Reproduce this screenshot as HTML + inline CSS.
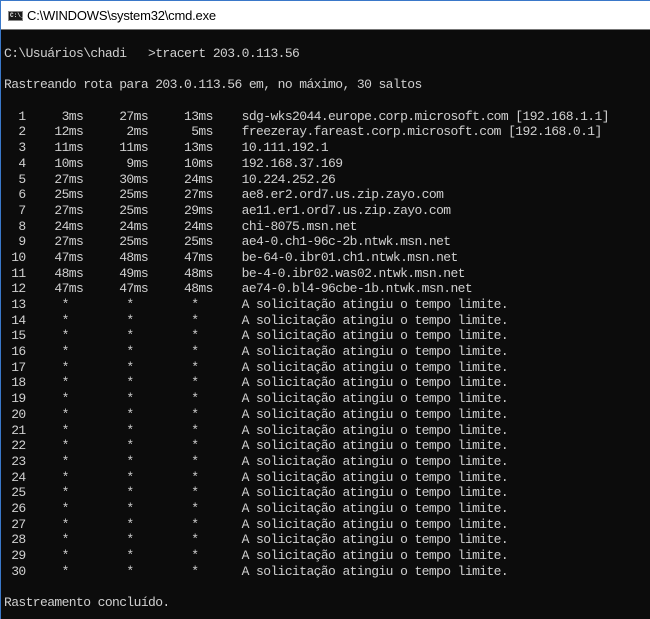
<!DOCTYPE html>
<html><head><meta charset="utf-8"><style>
html,body{margin:0;padding:0;width:650px;height:619px;overflow:hidden;background:#0c0c0c}
.title{position:absolute;left:0;top:0;width:650px;height:29px;background:#fff;border-top:1px solid #3a78c9;box-sizing:border-box}
.sep{position:absolute;left:0;top:29px;width:650px;height:1px;background:#777}
.lb{position:absolute;left:0;top:0;width:1px;height:619px;background:#3a78c9}
.icon{position:absolute;left:8px;top:10px;width:15px;height:10px;background:#1a1a1a;border:1px solid #888;box-sizing:border-box}
.icon span{position:absolute;left:1px;top:0;font:bold 6px "Liberation Mono",monospace;color:#eee;line-height:7px}
.tt{position:absolute;left:27px;top:7px;font:13px "Liberation Sans",sans-serif;color:#000;letter-spacing:-0.2px}
pre{position:absolute;left:4px;top:46px;margin:0;font:13px/15.69px "Liberation Mono",monospace;letter-spacing:-0.6px;color:#d0d0d0}
</style></head><body>
<div class="title"><div class="icon"><span>C:\_</span></div><div class="tt">C:\WINDOWS\system32\cmd.exe</div></div>
<div class="sep"></div>
<div class="lb"></div>
<pre>C:\Usuários\chadi   &gt;tracert 203.0.113.56

Rastreando rota para 203.0.113.56 em, no máximo, 30 saltos

  1     3ms     27ms     13ms    sdg-wks2044.europe.corp.microsoft.com [192.168.1.1]
  2    12ms      2ms      5ms    freezeray.fareast.corp.microsoft.com [192.168.0.1]
  3    11ms     11ms     13ms    10.111.192.1
  4    10ms      9ms     10ms    192.168.37.169
  5    27ms     30ms     24ms    10.224.252.26
  6    25ms     25ms     27ms    ae8.er2.ord7.us.zip.zayo.com
  7    27ms     25ms     29ms    ae11.er1.ord7.us.zip.zayo.com
  8    24ms     24ms     24ms    chi-8075.msn.net
  9    27ms     25ms     25ms    ae4-0.ch1-96c-2b.ntwk.msn.net
 10    47ms     48ms     47ms    be-64-0.ibr01.ch1.ntwk.msn.net
 11    48ms     49ms     48ms    be-4-0.ibr02.was02.ntwk.msn.net
 12    47ms     47ms     48ms    ae74-0.bl4-96cbe-1b.ntwk.msn.net
 13     *        *        *      A solicitação atingiu o tempo limite.
 14     *        *        *      A solicitação atingiu o tempo limite.
 15     *        *        *      A solicitação atingiu o tempo limite.
 16     *        *        *      A solicitação atingiu o tempo limite.
 17     *        *        *      A solicitação atingiu o tempo limite.
 18     *        *        *      A solicitação atingiu o tempo limite.
 19     *        *        *      A solicitação atingiu o tempo limite.
 20     *        *        *      A solicitação atingiu o tempo limite.
 21     *        *        *      A solicitação atingiu o tempo limite.
 22     *        *        *      A solicitação atingiu o tempo limite.
 23     *        *        *      A solicitação atingiu o tempo limite.
 24     *        *        *      A solicitação atingiu o tempo limite.
 25     *        *        *      A solicitação atingiu o tempo limite.
 26     *        *        *      A solicitação atingiu o tempo limite.
 27     *        *        *      A solicitação atingiu o tempo limite.
 28     *        *        *      A solicitação atingiu o tempo limite.
 29     *        *        *      A solicitação atingiu o tempo limite.
 30     *        *        *      A solicitação atingiu o tempo limite.

Rastreamento concluído.</pre>
</body></html>
